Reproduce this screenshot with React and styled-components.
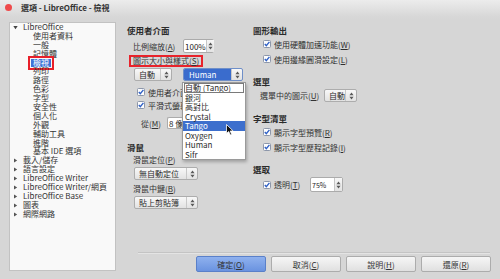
import React from "react";
import styled, { createGlobalStyle } from "styled-components";

const GlobalStyle = createGlobalStyle`
  html, body {
    margin: 0;
    padding: 0;
  }
  body {
    width: 500px;
    height: 279px;
    overflow: hidden;
    background: #d6d6d6;
    font-family: "Noto Sans CJK TC", "Noto Sans", sans-serif;
    font-size: 8px;
    color: #2f2f2f;
  }
  u {
    text-underline-offset: 1px;
  }
`;

const treeItems = [
  { label: "LibreOffice", level: 0, open: true },
  { label: "使用者資料", level: 1 },
  { label: "一般", level: 1 },
  { label: "記憶體", level: 1 },
  { label: "檢視", level: 1, selected: true },
  { label: "列印", level: 1 },
  { label: "路徑", level: 1 },
  { label: "色彩", level: 1 },
  { label: "字型", level: 1 },
  { label: "安全性", level: 1 },
  { label: "個人化", level: 1 },
  { label: "外觀", level: 1 },
  { label: "輔助工具", level: 1 },
  { label: "進階", level: 1 },
  { label: "基本 IDE 選項", level: 1 },
  { label: "載入/儲存", level: 0 },
  { label: "語言設定", level: 0 },
  { label: "LibreOffice Writer", level: 0 },
  { label: "LibreOffice Writer/網頁", level: 0 },
  { label: "LibreOffice Base", level: 0 },
  { label: "圖表", level: 0 },
  { label: "網際網路", level: 0 },
];

const themes = ["自動 (Tango)", "銀河", "高對比", "Crystal", "Tango", "Oxygen", "Human", "Sifr"];

const UpDown = () => (
  <svg width="5" height="8" viewBox="0 0 5 8">
    <path d="M2.5 0.6 L4.6 3.2 H0.4Z M2.5 7.4 L4.6 4.8 H0.4Z" fill="#5a5a5a" />
  </svg>
);

const Check = () => (
  <svg width="8" height="8" viewBox="0 0 8 8">
    <rect x="0.5" y="0.5" width="7" height="7" rx="1" fill="#fdfdfd" stroke="#8d97aa" />
    <path d="M1.8 4.1 L3.3 5.7 L6.4 1.9" stroke="#2f60c6" strokeWidth="1.4" fill="none" />
  </svg>
);

const Cursor = () => (
  <svg width="8" height="12" viewBox="0 0 8 12">
    <path d="M0.5 0.5 V9.5 L2.7 7.5 L4.3 11 L5.7 10.4 L4.2 7 H7.2 Z" fill="#111" stroke="#fff" strokeWidth="0.8" />
  </svg>
);

const TreeArrow = ({ open }) => (
  <svg width="5" height="5" viewBox="0 0 5 5">
    {open ? <path d="M0.3 1 H4.7 L2.5 4.3Z" fill="#444" /> : <path d="M1 0.4 L4.2 2.5 L1 4.6Z" fill="#555" />}
  </svg>
);

const App = () => {
  return (
    <Window>
      <GlobalStyle />
      <TitleBar>
        <CloseDot />
        <Title>選項 - LibreOffice - 檢視</Title>
      </TitleBar>
      <Body>
        <Tree>
          {treeItems.map((item) => (
            <TreeRow key={item.label} $level={item.level}>
              {item.level === 0 && (
                <ArrowSlot>
                  <TreeArrow open={item.open} />
                </ArrowSlot>
              )}
              <TreeLabel $selected={item.selected}>{item.label}</TreeLabel>
            </TreeRow>
          ))}
        </Tree>

        <Main>
          <Columns>
            <Column $w={126}>
              <Heading>使用者介面</Heading>
              <Row $mt={3} $h={14} $indent={6}>
                <Label $w={50}>
                  比例縮放(<u>A</u>)
                </Label>
                <SpinBox $w={31}>
                  <Field>100%</Field>
                  <SpinArrows>
                    <UpDown />
                  </SpinArrows>
                </SpinBox>
              </Row>
              <Row $mt={2} $h={12} $indent={2}>
                <Marked>
                  圖示大小與樣式(<u>S</u>)
                </Marked>
              </Row>
              <Row $mt={1} $h={13} $indent={7}>
                <Combo $w={38}>
                  <ComboText>自動</ComboText>
                  <ComboArrows>
                    <UpDown />
                  </ComboArrows>
                </Combo>
                <PopupAnchor $ml={11}>
                  <Combo $w={60} $selected>
                    <ComboText $selected>Human</ComboText>
                    <ComboArrows>
                      <UpDown />
                    </ComboArrows>
                  </Combo>
                  <Dropdown>
                    {themes.map((t, i) => (
                      <Option key={t} $active={t === "Tango"} $focus={i === 0}>
                        {t}
                      </Option>
                    ))}
                    <PointerSpot>
                      <Cursor />
                    </PointerSpot>
                  </Dropdown>
                </PopupAnchor>
              </Row>
              <CheckRow $mt={5} $indent={10}>
                <Check />
                <Clipped $w={34}>使用者介面使用系統字型(Y)</Clipped>
              </CheckRow>
              <CheckRow $mt={1} $indent={10}>
                <Check />
                <Clipped $w={34}>平滑式螢幕字型(G)</Clipped>
              </CheckRow>
              <Row $mt={6} $h={12} $indent={14}>
                <Label $w={26}>
                  從(<u>M</u>)
                </Label>
                <SpinBox $w={15} $open>
                  <Field $clip>8 像素</Field>
                </SpinBox>
              </Row>
              <Heading $mt={12}>滑鼠</Heading>
              <Row $mt={0} $h={12} $indent={6}>
                <Label>
                  滑鼠定位(<u>P</u>)
                </Label>
              </Row>
              <Row $mt={2} $h={13} $indent={7}>
                <Combo $w={64}>
                  <ComboText>無自動定位</ComboText>
                  <ComboArrows>
                    <UpDown />
                  </ComboArrows>
                </Combo>
              </Row>
              <Row $mt={2} $h={12} $indent={6}>
                <Label>
                  滑鼠中鍵(<u>B</u>)
                </Label>
              </Row>
              <Row $mt={2} $h={13} $indent={7}>
                <Combo $w={64}>
                  <ComboText>貼上剪貼簿</ComboText>
                  <ComboArrows>
                    <UpDown />
                  </ComboArrows>
                </Combo>
              </Row>
            </Column>

            <Column>
              <Heading>圖形輸出</Heading>
              <CheckRow $mt={2} $indent={10}>
                <Check />
                <span>
                  使用硬體加速功能(<u>W</u>)
                </span>
              </CheckRow>
              <CheckRow $mt={3} $indent={10}>
                <Check />
                <span>
                  使用邊緣圓滑設定(<u>L</u>)
                </span>
              </CheckRow>
              <Heading $mt={10}>選單</Heading>
              <Row $mt={2} $h={13} $indent={7}>
                <Label $w={64}>
                  選單中的圖示(<u>U</u>)
                </Label>
                <Combo $w={33}>
                  <ComboText>自動</ComboText>
                  <ComboArrows>
                    <UpDown />
                  </ComboArrows>
                </Combo>
              </Row>
              <Heading $mt={10}>字型清單</Heading>
              <CheckRow $mt={2} $indent={10}>
                <Check />
                <span>
                  顯示字型預覽(<u>R</u>)
                </span>
              </CheckRow>
              <CheckRow $mt={3} $indent={10}>
                <Check />
                <span>
                  顯示字型歷程記錄(<u>I</u>)
                </span>
              </CheckRow>
              <Heading $mt={10}>選取</Heading>
              <CheckRow $mt={2} $h={15} $indent={10}>
                <Check />
                <Label $w={33}>
                  透明(<u>T</u>)
                </Label>
                <SpinBox $w={33}>
                  <Field $small>75%</Field>
                  <SpinArrows>
                    <UpDown />
                  </SpinArrows>
                </SpinBox>
              </CheckRow>
            </Column>
          </Columns>

          <Footer>
            <Separator />
            <ButtonRow>
              <Button $primary>
                確定(<u>O</u>)
              </Button>
              <Button>
                取消(<u>C</u>)
              </Button>
              <Button>
                說明(<u>H</u>)
              </Button>
              <Button>
                還原(<u>R</u>)
              </Button>
            </ButtonRow>
          </Footer>
        </Main>
      </Body>
    </Window>
  );
};

export default App;

const Window = styled.div`
  width: 500px;
  height: 279px;
  display: flex;
  flex-direction: column;
  background: #d6d6d6;
`;

const TitleBar = styled.div`
  height: 20px;
  box-sizing: border-box;
  padding-bottom: 5px;
  display: flex;
  align-items: center;
  background: linear-gradient(#ececec, #d8d8d8 80%, #d6d6d6);
`;

const CloseDot = styled.div`
  width: 7px;
  height: 7px;
  margin-left: 5px;
  border-radius: 50%;
  background: #ef4a4b;
`;

const Title = styled.div`
  margin-left: 9px;
  font-size: 8px;
  line-height: 9px;
  font-weight: 700;
  color: #333;
`;

const Body = styled.div`
  flex: 1;
  display: flex;
  min-height: 0;
`;

const Tree = styled.div`
  width: 107px;
  margin: 2px 0 8px 9px;
  box-sizing: border-box;
  border: 1px solid #c2c2c2;
  background: #f9f9f9;
  overflow: hidden;
`;

const TreeRow = styled.div`
  height: 8.9px;
  line-height: 8.9px;
  display: flex;
  align-items: center;
  white-space: nowrap;
  padding-left: ${(p) => (p.$level === 0 ? 3 : 23)}px;
  color: #333;
`;

const ArrowSlot = styled.span`
  width: 5px;
  display: flex;
  margin-right: 5px;
`;

const TreeLabel = styled.span`
  padding: 0 2px;
  margin-left: -2px;
  ${(p) =>
    p.$selected &&
    `
    background: #3e74d6;
    color: #fff;
    outline: 2px solid #e8202a;
    outline-offset: 1px;
  `}
`;

const Main = styled.div`
  flex: 1;
  display: flex;
  flex-direction: column;
`;

const Columns = styled.div`
  display: flex;
  padding: 4px 0 0 11px;
`;

const Column = styled.div`
  width: ${(p) => (p.$w ? `${p.$w}px` : "auto")};
  flex: ${(p) => (p.$w ? "none" : 1)};
  display: flex;
  flex-direction: column;
`;

const Heading = styled.div`
  height: 12px;
  line-height: 12px;
  margin-top: ${(p) => p.$mt || 0}px;
  font-size: 8.5px;
  font-weight: 700;
  color: #2b2b2b;
`;

const Row = styled.div`
  display: flex;
  align-items: center;
  height: ${(p) => p.$h || 12}px;
  margin-top: ${(p) => p.$mt || 0}px;
  padding-left: ${(p) => p.$indent || 0}px;
  white-space: nowrap;
`;

const CheckRow = styled(Row)`
  gap: 3px;

  svg {
    flex: none;
  }
`;

const Clipped = styled.span`
  width: ${(p) => p.$w}px;
  overflow: hidden;
  flex: none;
`;

const Label = styled.span`
  width: ${(p) => (p.$w ? `${p.$w}px` : "auto")};
  flex: none;
  color: #333;
`;

const Marked = styled.div`
  width: 74px;
  height: 12px;
  box-sizing: border-box;
  border: 2px solid #e8232b;
  padding-left: 2px;
  line-height: 8px;
  color: #333;
`;

const SpinBox = styled.div`
  width: ${(p) => p.$w}px;
  height: 100%;
  box-sizing: border-box;
  display: flex;
  border: 1px solid #ababab;
  border-right-width: ${(p) => (p.$open ? 0 : 1)}px;
  border-radius: ${(p) => (p.$open ? "2px 0 0 2px" : "2px")};
  background: #fff;
`;

const Field = styled.div`
  flex: 1;
  display: flex;
  align-items: center;
  padding-left: 1px;
  white-space: nowrap;
  overflow: ${(p) => (p.$clip ? "hidden" : "visible")};
  font-size: ${(p) => (p.$small ? 7 : 8)}px;
  color: #222;
`;

const SpinArrows = styled.div`
  width: 7px;
  flex: none;
  display: flex;
  align-items: center;
  justify-content: center;
  border-left: 1px solid #c6c6c6;
  background: linear-gradient(#f6f6f6, #e3e3e3);
`;

const Combo = styled.div`
  width: ${(p) => p.$w}px;
  height: 100%;
  box-sizing: border-box;
  display: flex;
  border: 1px solid ${(p) => (p.$selected ? "#6f8fc8" : "#adadad")};
  border-radius: 2px;
  background: linear-gradient(#f8f8f8, #e2e2e2);
  overflow: hidden;
`;

const ComboText = styled.div`
  flex: 1;
  display: flex;
  align-items: center;
  padding-left: ${(p) => (p.$selected ? 5 : 4)}px;
  color: ${(p) => (p.$selected ? "#fff" : "#2c2c2c")};
  background: ${(p) => (p.$selected ? "#3a6ccd" : "transparent")};
`;

const ComboArrows = styled.div`
  width: 10px;
  display: flex;
  align-items: center;
  justify-content: center;
  border-left: 1px solid #c8c8c8;
`;

const PopupAnchor = styled.div`
  position: relative;
  height: 100%;
  margin-left: ${(p) => p.$ml || 0}px;
`;

const Dropdown = styled.div`
  position: absolute;
  top: 14px;
  left: -1px;
  width: 64px;
  box-sizing: border-box;
  z-index: 5;
  border: 1px solid #9a9a9a;
  background: #fff;
  box-shadow: 1px 2px 3px rgba(0, 0, 0, 0.25);
`;

const Option = styled.div`
  height: 9.5px;
  line-height: 9.5px;
  box-sizing: border-box;
  padding-left: 2px;
  white-space: nowrap;
  color: ${(p) => (p.$active ? "#fff" : "#2c2c2c")};
  background: ${(p) => (p.$active ? "#3d6fcd" : "transparent")};
  ${(p) => p.$focus && "outline: 1px solid #7a7a7a; outline-offset: -1px; padding-left: 1px; margin: 0 1px;"}
`;

const PointerSpot = styled.div`
  position: absolute;
  left: 43px;
  top: 41px;
  display: flex;
`;

const Footer = styled.div`
  margin-top: auto;
  padding-bottom: 7px;
`;

const Separator = styled.div`
  height: 1px;
  margin: 0 10px 0 22px;
  background: #c4c4c4;
  box-shadow: 0 1px 0 #e4e4e4;
`;

const ButtonRow = styled.div`
  display: flex;
  justify-content: flex-end;
  gap: 5px;
  margin-top: 3px;
  padding-right: 9px;
`;

const Button = styled.div`
  width: 70px;
  height: 16px;
  box-sizing: border-box;
  display: flex;
  align-items: center;
  justify-content: center;
  border: 1px solid ${(p) => (p.$primary ? "#5a80c9" : "#acacac")};
  border-radius: 2px;
  background: ${(p) =>
    p.$primary ? "linear-gradient(#8fb1ee, #6a93e0)" : "linear-gradient(#f6f6f6, #e0e0e0)"};
  color: #333;
  font-size: 8px;
`;
